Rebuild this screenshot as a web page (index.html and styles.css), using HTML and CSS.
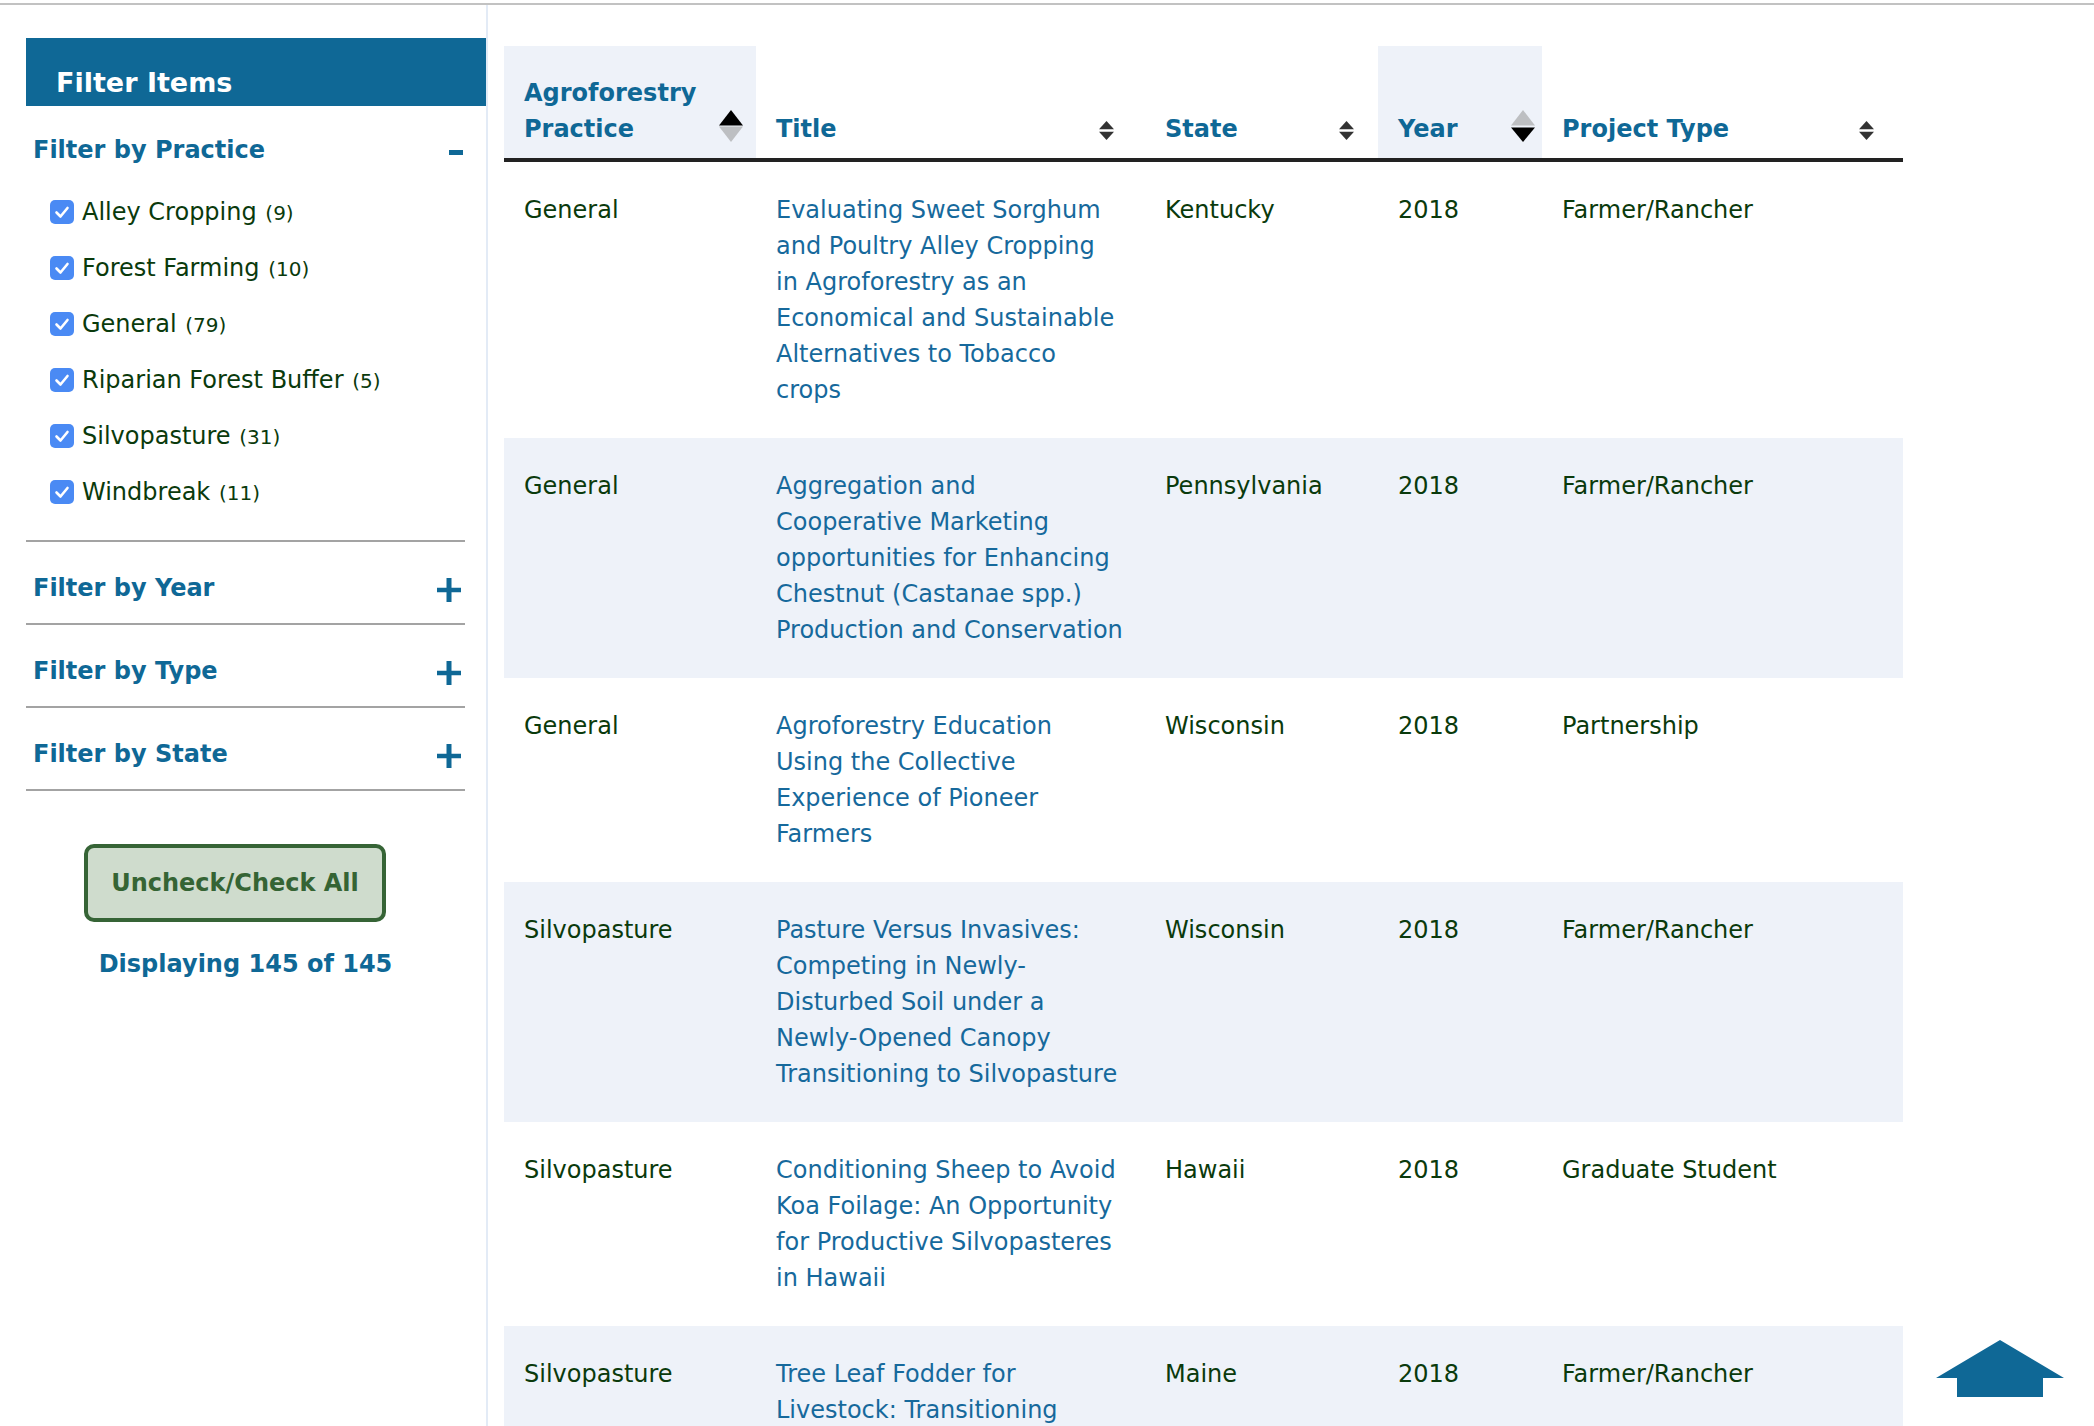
FILE: index.html
```html
<!DOCTYPE html>
<html lang="en">
<head>
<meta charset="utf-8">
<title>Agroforestry Projects</title>
<link rel="stylesheet" href="styles.css">
</head>
<body>
<div class="page">
  <aside class="sidebar">
    <h2 class="filter-title">Filter Items</h2>

    <section class="filter filter--open">
      <div class="filter-head"><span>Filter by Practice</span><span class="icon-minus"></span></div>
      <ul class="options">
        <li class="option"><span class="check"><svg viewBox="0 0 24 24"><polyline points="6.5,12.5 10.5,16.5 17.5,8"/></svg></span><span>Alley Cropping <span class="count">(9)</span></span></li>
        <li class="option"><span class="check"><svg viewBox="0 0 24 24"><polyline points="6.5,12.5 10.5,16.5 17.5,8"/></svg></span><span>Forest Farming <span class="count">(10)</span></span></li>
        <li class="option"><span class="check"><svg viewBox="0 0 24 24"><polyline points="6.5,12.5 10.5,16.5 17.5,8"/></svg></span><span>General <span class="count">(79)</span></span></li>
        <li class="option"><span class="check"><svg viewBox="0 0 24 24"><polyline points="6.5,12.5 10.5,16.5 17.5,8"/></svg></span><span>Riparian Forest Buffer <span class="count">(5)</span></span></li>
        <li class="option"><span class="check"><svg viewBox="0 0 24 24"><polyline points="6.5,12.5 10.5,16.5 17.5,8"/></svg></span><span>Silvopasture <span class="count">(31)</span></span></li>
        <li class="option"><span class="check"><svg viewBox="0 0 24 24"><polyline points="6.5,12.5 10.5,16.5 17.5,8"/></svg></span><span>Windbreak <span class="count">(11)</span></span></li>
      </ul>
    </section>

    <section class="filter">
      <div class="filter-head"><span>Filter by Year</span><svg class="icon-plus" viewBox="0 0 24 24"><rect x="9.5" y="0" width="5" height="24"/><rect x="0" y="9.75" width="24" height="4.5"/></svg></div>
    </section>
    <section class="filter">
      <div class="filter-head"><span>Filter by Type</span><svg class="icon-plus" viewBox="0 0 24 24"><rect x="9.5" y="0" width="5" height="24"/><rect x="0" y="9.75" width="24" height="4.5"/></svg></div>
    </section>
    <section class="filter">
      <div class="filter-head"><span>Filter by State</span><svg class="icon-plus" viewBox="0 0 24 24"><rect x="9.5" y="0" width="5" height="24"/><rect x="0" y="9.75" width="24" height="4.5"/></svg></div>
    </section>

    <button class="toggle-all" type="button">Uncheck/Check All</button>
    <p class="display-count">Displaying 145 of 145</p>
  </aside>

  <main class="content">
    <table class="projects">
      <colgroup>
        <col class="w-practice"><col class="w-title"><col class="w-state"><col class="w-year"><col class="w-type">
      </colgroup>
      <thead>
        <tr>
          <th class="sorted col-practice"><div class="th-in"><span>Agroforestry Practice</span><svg class="sort-active" viewBox="0 0 24 32"><polygon class="on" points="12,0 24,15.5 0,15.5"/><polygon class="off" points="0,16.5 24,16.5 12,32"/></svg></div></th>
          <th class="col-title"><div class="th-in"><span>Title</span><svg class="sort-both" viewBox="0 0 15 19"><polygon points="7.5,0 15,8.2 0,8.2"/><polygon points="0,10.8 15,10.8 7.5,19"/></svg></div></th>
          <th class="col-state"><div class="th-in"><span>State</span><svg class="sort-both" viewBox="0 0 15 19"><polygon points="7.5,0 15,8.2 0,8.2"/><polygon points="0,10.8 15,10.8 7.5,19"/></svg></div></th>
          <th class="sorted col-year"><div class="th-in"><span>Year</span><svg class="sort-active" viewBox="0 0 24 32"><polygon class="off" points="12,0 24,15.5 0,15.5"/><polygon class="on" points="0,17.5 24,17.5 12,32"/></svg></div></th>
          <th class="col-type"><div class="th-in"><span>Project Type</span><svg class="sort-both" viewBox="0 0 15 19"><polygon points="7.5,0 15,8.2 0,8.2"/><polygon points="0,10.8 15,10.8 7.5,19"/></svg></div></th>
        </tr>
      </thead>
      <tbody>
        <tr>
          <td>General</td>
          <td class="title"><a href="#">Evaluating Sweet Sorghum and Poultry Alley Cropping<br>in Agroforestry as an Economical and Sustainable Alternatives to Tobacco crops</a></td>
          <td>Kentucky</td>
          <td>2018</td>
          <td>Farmer/Rancher</td>
        </tr>
        <tr>
          <td>General</td>
          <td class="title"><a href="#">Aggregation and Cooperative Marketing opportunities for Enhancing Chestnut (Castanae spp.) Production and Conservation</a></td>
          <td>Pennsylvania</td>
          <td>2018</td>
          <td>Farmer/Rancher</td>
        </tr>
        <tr>
          <td>General</td>
          <td class="title"><a href="#">Agroforestry Education Using the Collective Experience of Pioneer Farmers</a></td>
          <td>Wisconsin</td>
          <td>2018</td>
          <td>Partnership</td>
        </tr>
        <tr>
          <td>Silvopasture</td>
          <td class="title"><a href="#">Pasture Versus Invasives: Competing in Newly-Disturbed Soil under a Newly-Opened Canopy Transitioning to Silvopasture</a></td>
          <td>Wisconsin</td>
          <td>2018</td>
          <td>Farmer/Rancher</td>
        </tr>
        <tr>
          <td>Silvopasture</td>
          <td class="title"><a href="#">Conditioning Sheep to Avoid Koa Foilage: An Opportunity for Productive Silvopasteres in Hawaii</a></td>
          <td>Hawaii</td>
          <td>2018</td>
          <td>Graduate Student</td>
        </tr>
        <tr>
          <td>Silvopasture</td>
          <td class="title"><a href="#">Tree Leaf Fodder for Livestock: Transitioning Small Farms to Silvopasture</a></td>
          <td>Maine</td>
          <td>2018</td>
          <td>Farmer/Rancher</td>
        </tr>
      </tbody>
    </table>
  </main>
</div>

<a class="to-top" href="#" aria-label="Back to top"><svg viewBox="0 0 128 57"><polygon points="64,0 128,38 107,38 107,57 21,57 21,38 0,38"/></svg></a>
</body>
</html>
```

FILE: styles.css
```css
html, body {
  margin: 0;
  padding: 0;
  background: #ffffff;
}

body {
  font-family: "DejaVu Sans", Verdana, sans-serif;
  color: #0a3a0c;
}

.page {
  display: flex;
  align-items: stretch;
  margin-top: 3px;
  border-top: 2px solid #c2c2c2;
}

/* ---------- Sidebar ---------- */
.sidebar {
  flex: none;
  width: 460px;
  padding: 33px 0 0 26px;
  border-right: 2px solid #e3ebf6;
}

.filter-title {
  margin: 0;
  height: 68px;
  box-sizing: border-box;
  padding: 30px 0 0 30px;
  background: #0f6896;
  color: #ffffff;
  font-size: 27px;
  line-height: 30px;
  font-weight: bold;
}

.filter {
  width: 439px;
  padding: 31px 0 20px;
  border-bottom: 2px solid #a3a3a3;
}

.filter--open {
  padding: 29px 0 36px;
}

.filter-head {
  display: flex;
  justify-content: space-between;
  align-items: center;
  height: 30px;
  padding: 0 2px 0 7px;
  font-size: 24px;
  line-height: 30px;
  font-weight: bold;
  color: #0f6896;
}

.icon-minus {
  width: 14px;
  height: 5px;
  margin-top: 5px;
  background: #0f6896;
}

.icon-plus {
  width: 24px;
  height: 24px;
  margin: 4px 2px 0 0;
  fill: #0f6896;
}

.options {
  list-style: none;
  margin: 35px 0 0;
  padding: 0 0 0 24px;
  display: flex;
  flex-direction: column;
  gap: 32px;
}

.option {
  display: flex;
  align-items: center;
  gap: 8px;
  height: 24px;
  font-size: 24px;
  line-height: 24px;
  color: #0a3a0c;
}

.check {
  flex: none;
  display: flex;
  width: 24px;
  height: 24px;
  border-radius: 5px;
  background: #4a8af4;
}

.check svg {
  width: 24px;
  height: 24px;
  fill: none;
  stroke: #ffffff;
  stroke-width: 2.6;
  stroke-linecap: round;
  stroke-linejoin: round;
}

.count {
  margin-left: 1px;
  font-size: 20px;
}

.toggle-all {
  display: block;
  width: 302px;
  height: 78px;
  box-sizing: border-box;
  margin: 53px 0 0 58px;
  padding: 0;
  border: 4px solid #366436;
  border-radius: 10px;
  background: #cfdccd;
  color: #356434;
  font-family: "DejaVu Sans", Verdana, sans-serif;
  font-size: 24px;
  line-height: 30px;
  font-weight: bold;
}

.display-count {
  width: 439px;
  margin: 27px 0 0;
  text-align: center;
  font-size: 24px;
  line-height: 30px;
  font-weight: bold;
  color: #0f6896;
}

/* ---------- Table ---------- */
.content {
  flex: 1;
  padding: 41px 0 0 16px;
}

.projects {
  width: 1399px;
  border-collapse: collapse;
  table-layout: fixed;
}

.w-practice { width: 252px; }
.w-title { width: 389px; }
.w-state { width: 233px; }
.w-year { width: 164px; }
.w-type { width: 361px; }

.projects th {
  padding: 29px 0 11px 20px;
  vertical-align: bottom;
  text-align: left;
  font-size: 24px;
  line-height: 36px;
  font-weight: bold;
  color: #0f6896;
  border-bottom: 4px solid #222222;
}

.projects th.sorted {
  background: #eef2f9;
}

.projects th.col-practice { padding-right: 13px; }
.projects th.col-title { padding-right: 31px; }
.projects th.col-state { padding-right: 24px; }
.projects th.col-year { padding-right: 7px; }
.projects th.col-type { padding-right: 29px; }

.th-in {
  display: flex;
  justify-content: space-between;
  align-items: flex-end;
  gap: 8px;
}

.sort-both {
  flex: none;
  width: 15px;
  height: 19px;
  margin-bottom: 7px;
  fill: #333333;
}

.sort-active {
  flex: none;
  width: 24px;
  height: 32px;
  margin-bottom: 5px;
}

.sort-active .on { fill: #000000; }
.sort-active .off { fill: #bdbfc2; }

.projects td {
  padding: 30px 20px;
  vertical-align: top;
  font-size: 24px;
  line-height: 36px;
  color: #0a3a0c;
}

.projects tbody tr:nth-child(even) td {
  background: #eef2f9;
}

.projects td.title a {
  color: #16699c;
  text-decoration: none;
}

/* ---------- Back to top ---------- */
.to-top {
  position: fixed;
  right: 30px;
  bottom: 29px;
  width: 128px;
  height: 57px;
}

.to-top svg {
  display: block;
  width: 128px;
  height: 57px;
  fill: #0f6896;
}
```
